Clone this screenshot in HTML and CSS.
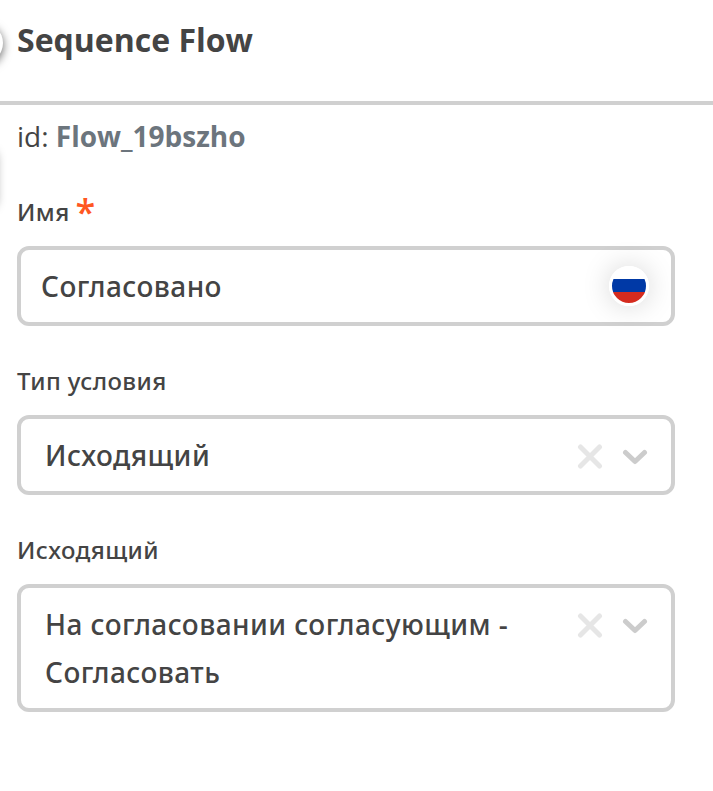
FILE: index.html
```html
<!DOCTYPE html>
<html lang="ru">
<head>
<meta charset="utf-8">
<title>Sequence Flow</title>
<link rel="stylesheet" href="styles.css">
</head>
<body>
<aside class="panel">
  <span class="edge edge-round"></span>
  <span class="edge edge-tall"></span>
  <header class="head"><h1>Sequence Flow</h1></header>
  <main class="body">
    <p class="ident">id: <b>Flow_19bszho</b></p>
    <section class="field">
      <label class="label">Имя <span class="req">*</span></label>
      <div class="control text"><span class="value">Согласовано</span>
        <span class="flag"></span>
      </div>
    </section>
    <section class="field">
      <label class="label">Тип условия</label>
      <div class="control"><span class="value">Исходящий</span>
        <svg class="clear" viewBox="0 0 26 26"><path d="M3.500 3L22.500 22M22.500 3L3.500 22"/></svg>
        <svg class="chev" viewBox="0 0 26 26"><path d="M3.500 8.500L13 17.500L22.500 8.500"/></svg>
      </div>
    </section>
    <section class="field">
      <label class="label">Исходящий</label>
      <div class="control"><span class="value">На согласовании согласующим - Согласовать</span>
        <svg class="clear" viewBox="0 0 26 26"><path d="M3.500 3L22.500 22M22.500 3L3.500 22"/></svg>
        <svg class="chev" viewBox="0 0 26 26"><path d="M3.500 8.500L13 17.500L22.500 8.500"/></svg>
      </div>
    </section>
  </main>
</aside>
</body>
</html>
```
FILE: styles.css
```css
* { box-sizing: border-box; }
body { margin: 0; background: #fff; color: #444; font-family: "Open Sans", sans-serif; }
.panel { position: relative; height: 791px; overflow: hidden; }
.edge { position: absolute; background: #fff; }
.edge-round { left: -37px; top: 23px; width: 40px; height: 40px; border-radius: 50%; box-shadow: 0 3px 10px rgba(0,0,0,.6); }
.edge-tall { left: -25px; top: 150px; width: 22px; height: 58px; border-radius: 8px; box-shadow: 0 0 10px rgba(0,0,0,.35); }
.head { height: 105px; padding: 18px 17px 0; border-bottom: 4px solid #d0d0d0; }
h1 { margin: 0; font-size: 32px; line-height: 44px; font-weight: 700; }
.body { padding: 11px 38px 0 17px; }
.ident { margin: 0 0 1px; font-size: 28px; line-height: 40px; }
.ident b { color: #6c757d; }
.field { margin-bottom: 37px; }
.label { display: flex; align-items: center; gap: 6px; height: 52px; padding-bottom: 17px; font: 500 24px "Noto Sans", sans-serif; letter-spacing: .42px; }
.field:first-of-type .label { height: 89px; padding-top: 19px; padding-bottom: 0; }
.req { color: #ff5722; font: 600 36px "Open Sans", sans-serif; }
.control { display: flex; align-items: flex-start; min-height: 80px; padding: 12px 23px 12px 24px; border: 4px solid #d0d0d0; border-radius: 12px; font: 500 28px/48px "Noto Sans", sans-serif; letter-spacing: .43px; }
.text { padding-left: 20px; padding-right: 22px; }
.value { flex: 1; }
.clear, .chev { flex: none; width: 26px; height: 26px; margin-top: 13px; fill: none; stroke: #e6e6e6; stroke-width: 5; stroke-linecap: round; stroke-linejoin: round; }
.chev { margin-left: 19px; stroke: #ccc; }
.flag { width: 40px; height: 40px; margin-top: 4px; border: 3px solid #fff; border-radius: 50%; background: linear-gradient(#fff 0 30%, #0039a6 30% 69%, #d52b1e 69%); box-shadow: 0 0 28px rgba(0,0,0,.17); }
```
